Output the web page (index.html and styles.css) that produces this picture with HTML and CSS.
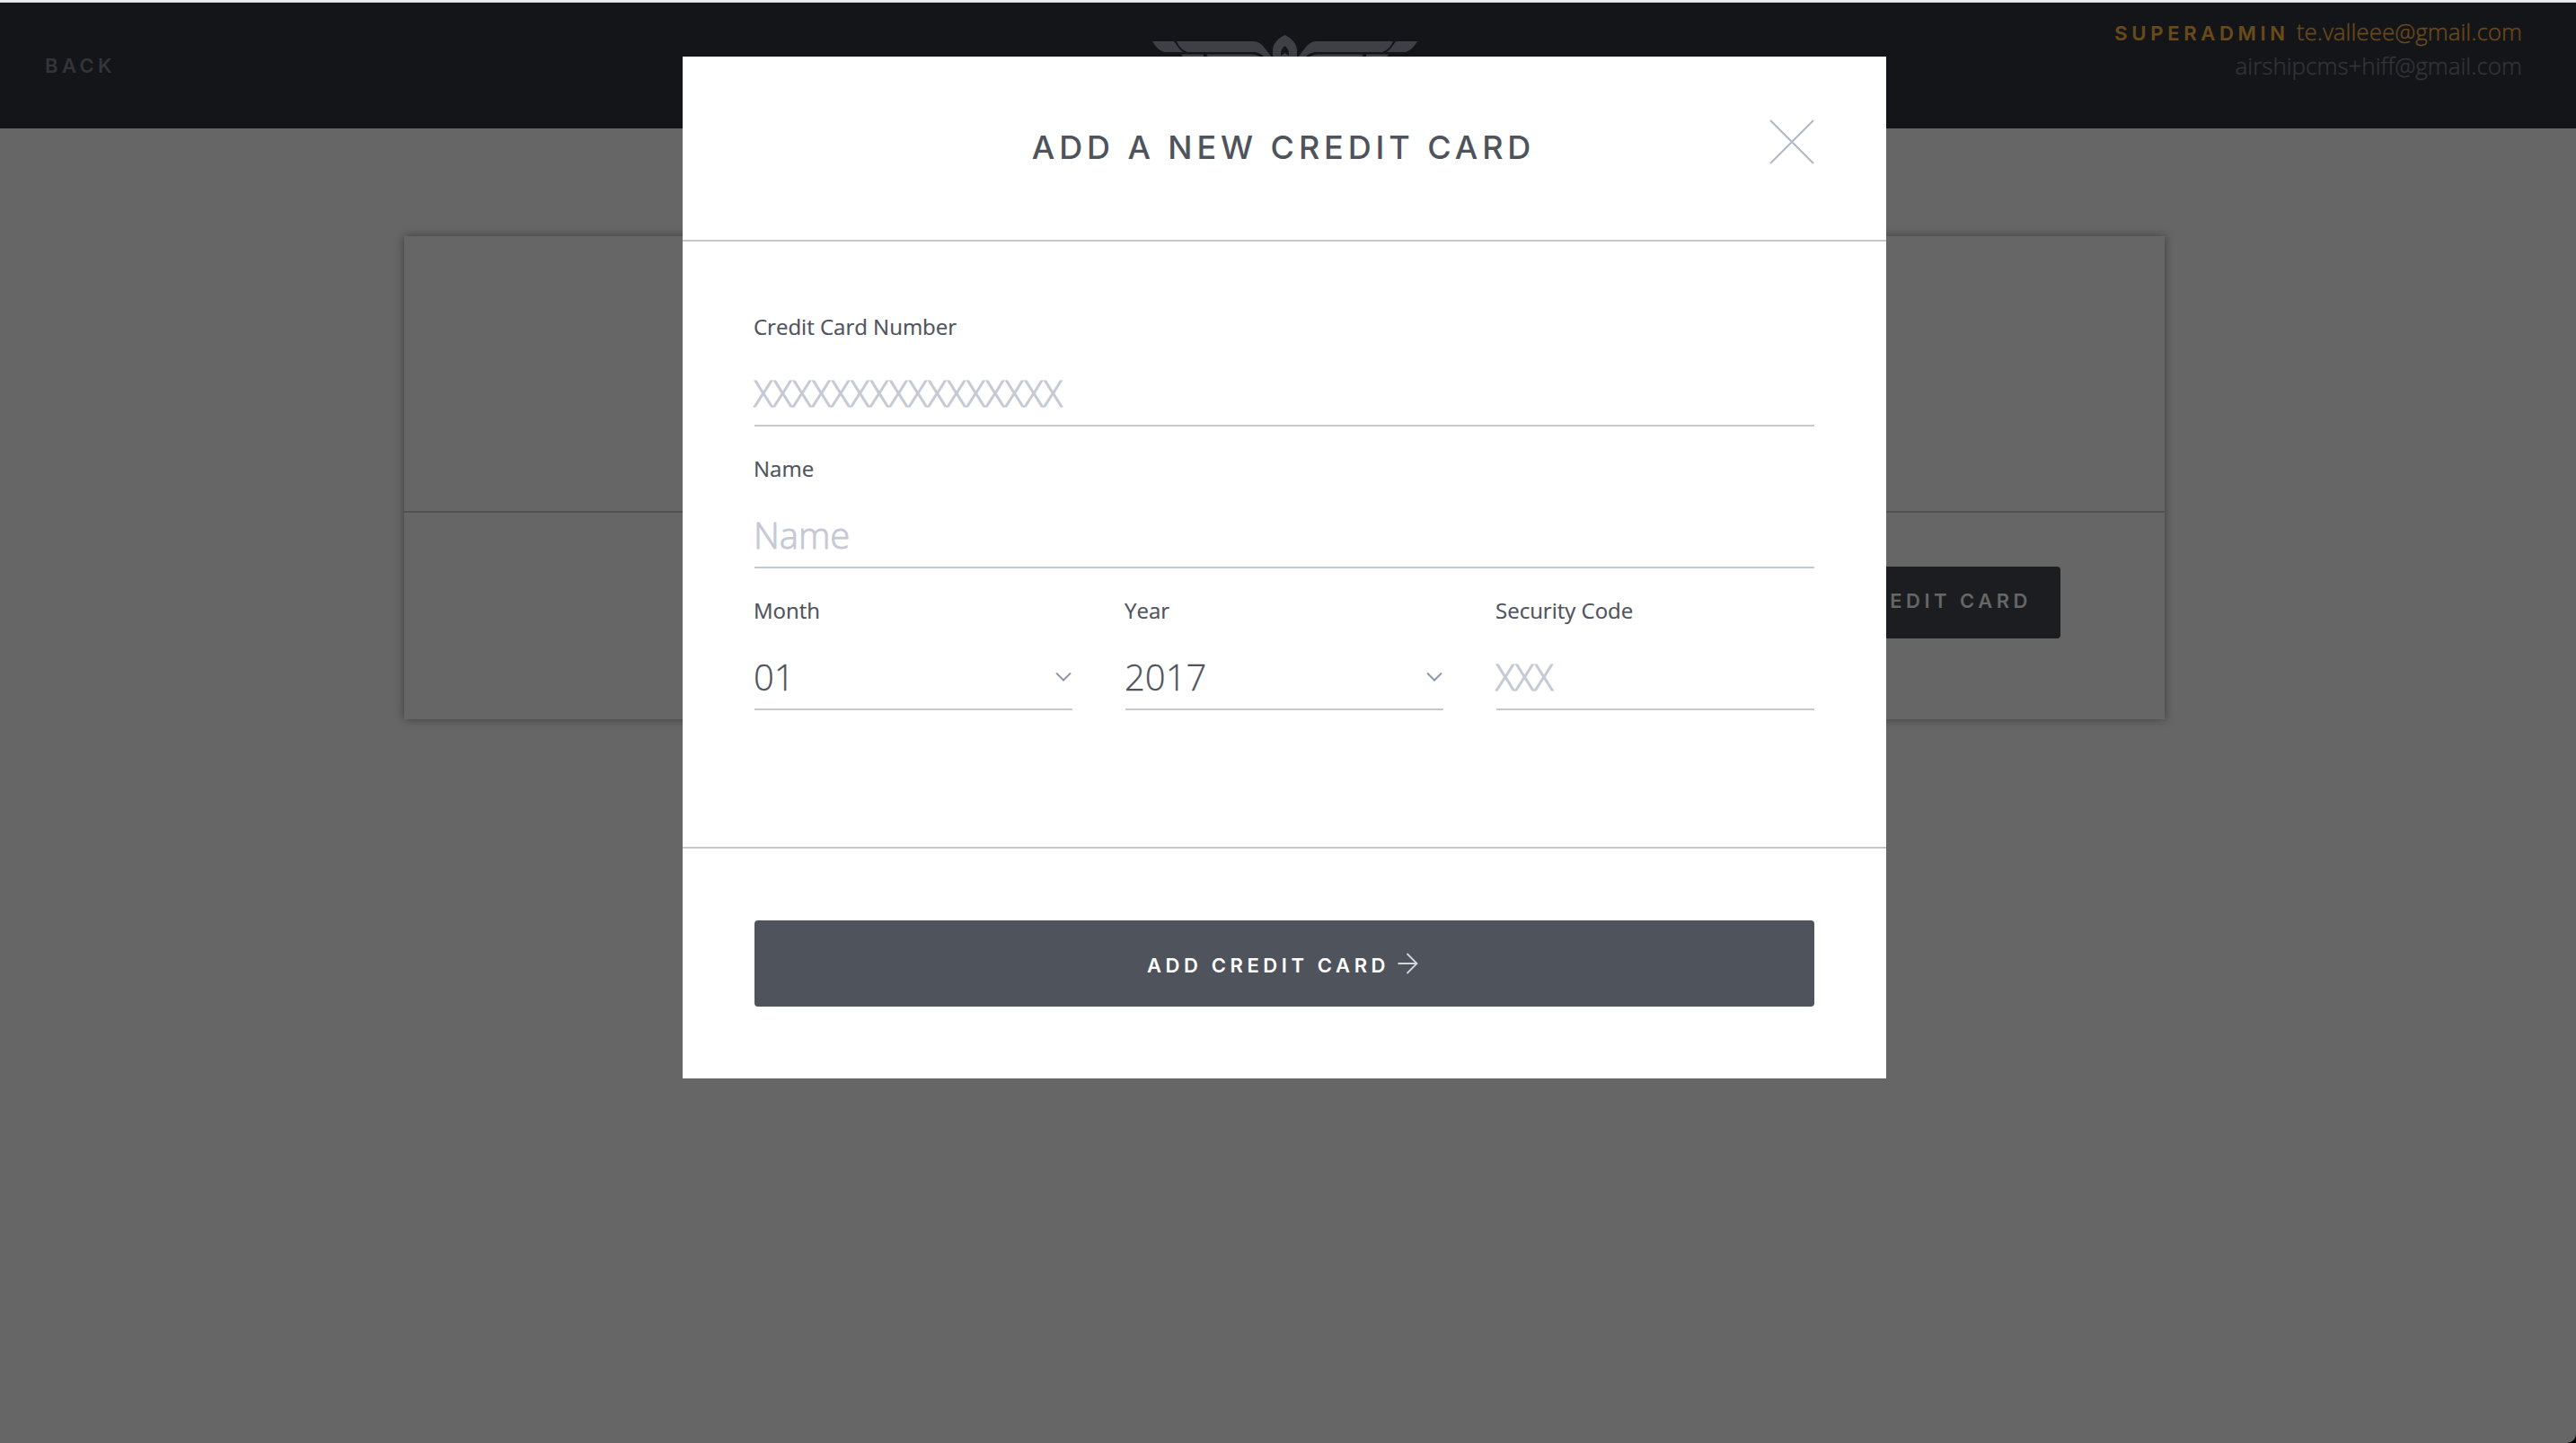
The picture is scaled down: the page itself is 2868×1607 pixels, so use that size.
FILE: index.html
```html
<!DOCTYPE html>
<html lang="en">
<head>
<meta charset="utf-8">
<title>Add a New Credit Card</title>
<link rel="stylesheet" href="styles.css">
</head>
<body>
<div class="page">
  <header class="topbar">
    <a class="back">BACK</a>
    <svg class="logo" viewBox="0 0 296 60" width="296" height="60" fill="#3f4045">
      <path d="M0 7H24C27 11 29 15 34 19H13C7 17 3 12 0 7Z"/>
      <path d="M27 7H112C117 7 120 9 123 12L138 31V60H128V28C122 21 118 19 112 19H39C33 17 29 12 27 7Z"/>
      <path d="M32 21.500H57V32H40ZM60 21.500H111C118 22 122 24 126 32H68Z"/>
      <path d="M295 7H271C268 11 266 15 261 19H282C288 17 292 12 295 7Z"/>
      <path d="M268 7H183C178 7 175 9 172 12L157 31V60H167V28C173 21 177 19 183 19H256C262 17 266 12 268 7Z"/>
      <path d="M263 21.500H238V32H255ZM235 21.500H184C177 22 173 24 169 32H227Z"/>
      <path fill-rule="evenodd" d="M147.500 0C141 3 134 9 134 17V30H161V17C161 9 154 3 147.500 0ZM147.500 12C145 14 143 17 143 20V23L147.500 20L152 23V20C152 17 150 14 147.500 12Z"/>
    </svg>
    <div class="account">
      <div class="account-row account-admin"><span class="role">SUPERADMIN</span><span>te.valleee@gmail.com</span></div>
      <div class="account-row">airshipcms+hiff@gmail.com</div>
    </div>
  </header>
  <main class="panel">
    <div class="panel-top"></div>
    <div class="panel-actions"><button class="panel-button">ADD CREDIT CARD</button></div>
  </main>
</div>
<div class="modal">
  <header class="modal-header">
    <h1 class="modal-title">ADD A NEW CREDIT CARD</h1>
    <svg class="close" viewBox="0 0 50 50" width="50" height="50"><path d="M1 1L49 49M49 1L1 49" stroke="#afb6c5" stroke-width="2" fill="none"/></svg>
  </header>
  <form class="fields">
    <label class="field"><span class="label">Credit Card Number</span><span class="value placeholder">XXXXXXXXXXXXXXXX</span></label>
    <label class="field"><span class="label">Name</span><span class="value placeholder">Name</span></label>
    <div class="field-row">
      <label class="field"><span class="label">Month</span><span class="value">01<svg class="chevron" viewBox="0 0 18 12" width="18" height="12"><path d="M1 1.500L9 9.500L17 1.500"/></svg></span></label>
      <label class="field"><span class="label">Year</span><span class="value">2017<svg class="chevron" viewBox="0 0 18 12" width="18" height="12"><path d="M1 1.500L9 9.500L17 1.500"/></svg></span></label>
      <label class="field"><span class="label">Security Code</span><span class="value placeholder">XXX</span></label>
    </div>
  </form>
  <footer class="modal-footer">
    <button class="submit"><span>ADD CREDIT CARD</span><svg class="arrow" viewBox="0 0 23 24" width="23" height="24"><path d="M0.500 12H21.500M10.500 1L21.500 12L10.500 23"/></svg></button>
  </footer>
</div>
</body>
</html>
```
FILE: styles.css
```css
* { box-sizing: border-box; }
html { background: #000; }
body {
  margin: 0;
  height: 1607px;
  overflow: hidden;
  border-bottom-right-radius: 10px;
  background: #666;
  font-family: "Open Sans", sans-serif;
  color: #4f535c;
}
.topbar {
  display: grid;
  grid-template-columns: 1fr 296px 1fr;
  height: 143px;
  padding: 0 60px 0 50px;
  border-top: 2px solid #ececf0;
  box-shadow: inset 0 1px #cdcdd2;
  background: #141519;
  color: #333438;
}
.back {
  padding-top: 57px;
  font: 600 22px/28px Inter, sans-serif;
  letter-spacing: 4.400px;
}
.logo { margin: 37px 0 0 2px; }
.account {
  display: flex;
  flex-direction: column;
  padding-top: 14px;
  align-items: flex-end;
  font-size: 26px;
  line-height: 38px;
  font-weight: 300;
}
.account-row {
  display: flex;
  align-items: baseline;
  height: 38px;
  -webkit-text-stroke: .4px;
}
.account-admin { color: #694a1b; }
.role {
  margin-right: 8px;
  font: 600 22px/38px Inter, sans-serif;
  letter-spacing: 4.700px;
  -webkit-text-stroke: .2px;
}
.panel {
  width: 1960px;
  height: 538px;
  margin: 120px 0 0 450px;
  box-shadow: 0 0 10px rgba(0, 0, 0, .4);
}
.panel-top { height: 308px; border-bottom: 2px solid #515151; }
.panel-actions {
  display: flex;
  justify-content: flex-end;
  padding: 60px 116px 0 0;
}
.panel-button {
  width: 340px;
  height: 80px;
  padding: 0 32px 4px 0;
  border: 0;
  border-radius: 4px;
  background: #1c1d21;
  color: #666;
  text-align: right;
  font: 600 22px Inter, sans-serif;
  letter-spacing: 4.500px;
}
.modal {
  position: absolute;
  left: 760px;
  top: 63px;
  width: 1340px;
  height: 1138px;
  background: #fff;
}
.modal-header {
  display: grid;
  grid-template-columns: 1fr 50px;
  height: 206px;
  padding: 0 80px 0 130px;
  border-bottom: 2px solid #c5c6cb;
}
.modal-title {
  margin: 77px 2px 0 0;
  text-align: center;
  white-space: nowrap;
  font: 500 36px/48px Inter, sans-serif;
  letter-spacing: 4.900px;
}
.close { margin-top: 70px; }
.fields {
  height: 676px;
  padding: 79px 80px 0;
  border-bottom: 2px solid #c5c6cb;
}
.field { display: block; height: 158px; }
.label {
  display: block;
  text-indent: -1px;
  font-size: 24px;
  line-height: 32px;
  -webkit-text-stroke: .2px;
}
.value {
  display: flex;
  align-items: center;
  justify-content: space-between;
  height: 77px;
  margin-top: 18px;
  padding-top: 3px;
  border-bottom: 2px solid #c5c9d4;
  font-size: 40px;
  font-weight: 300;
  text-indent: -1px;
  -webkit-text-stroke: .3px;
}
.placeholder { color: #c5c9d4; -webkit-text-stroke: .9px; }
.field-row {
  display: grid;
  grid-template-columns: repeat(3, 354px);
  justify-content: space-between;
}
.chevron { margin: 2px 1px 0 0; fill: none; stroke: #8d98ad; stroke-width: 2; }
.modal-footer { padding: 80px; }
.submit {
  display: flex;
  align-items: center;
  justify-content: center;
  width: 100%;
  height: 96px;
  padding: 0 4px 0 0;
  border: 0;
  border-radius: 4px;
  background: #4f535c;
  color: #fff;
  font: 600 22px Inter, sans-serif;
  letter-spacing: 4.600px;
}
.submit span { padding-top: 4px; }
.arrow { margin-left: 9px; fill: none; stroke: #d5d6d9; stroke-width: 1.800; }
```
